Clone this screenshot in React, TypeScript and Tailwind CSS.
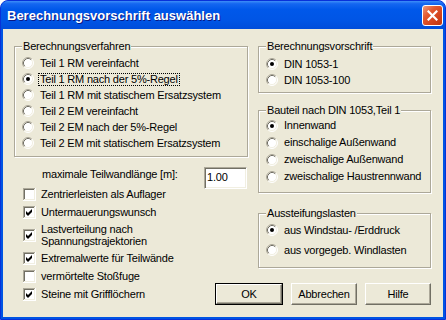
import React from "react";

function Radio({ checked }: { checked?: boolean }) {
  return (
    <svg width="12" height="12" viewBox="0 0 12 12" className="shrink-0">
      <circle cx="6" cy="6" r="5" fill="#fff" />
      <path d="M2.11 9.89 A5.5 5.5 0 0 1 9.89 2.11" stroke="#ACA899" strokeWidth="1" fill="none" />
      <path d="M9.89 2.11 A5.5 5.5 0 0 1 2.11 9.89" stroke="#FFFFFF" strokeWidth="1" fill="none" />
      <path d="M2.82 9.18 A4.5 4.5 0 0 1 9.18 2.82" stroke="#716F64" strokeWidth="1" fill="none" />
      <path d="M9.18 2.82 A4.5 4.5 0 0 1 2.82 9.18" stroke="#F1EFE2" strokeWidth="1" fill="none" />
      {checked && <circle cx="6" cy="6" r="2" fill="#000" />}
    </svg>
  );
}

function Check({ checked }: { checked?: boolean }) {
  return (
    <svg width="13" height="13" viewBox="0 0 13 13" className="shrink-0" shapeRendering="crispEdges">
      <rect x="0" y="0" width="13" height="13" fill="#fff" />
      <rect x="0" y="0" width="12" height="1" fill="#ACA899" />
      <rect x="0" y="0" width="1" height="12" fill="#ACA899" />
      <rect x="1" y="1" width="10" height="1" fill="#716F64" />
      <rect x="1" y="1" width="1" height="10" fill="#716F64" />
      <rect x="0" y="12" width="13" height="1" fill="#fff" />
      <rect x="12" y="0" width="1" height="13" fill="#fff" />
      <rect x="1" y="11" width="11" height="1" fill="#F1EFE2" />
      <rect x="11" y="1" width="1" height="11" fill="#F1EFE2" />
      {checked && <polygon points="3,5 5,7 9,3 9,6 5,10 3,8" fill="#000" shapeRendering="geometricPrecision" />}
    </svg>
  );
}

function Group({
  label,
  className,
  children,
}: {
  label: string;
  className: string;
  children: React.ReactNode;
}) {
  return (
    <div
      className={`relative border border-[#ACA899] shadow-[inset_1px_1px_0_#fff,1px_1px_0_#fff] pl-[7px] ${className}`}
    >
      <span className="absolute -top-[7px] left-[7px] bg-[#ECE9D8] px-[1px] leading-[13px] whitespace-nowrap">
        {label}
      </span>
      {children}
    </div>
  );
}

function RadioRow({
  label,
  checked,
  focus,
  h,
}: {
  label: string;
  checked?: boolean;
  focus?: boolean;
  h: string;
}) {
  return (
    <div className={`flex items-center gap-[6px] ${h}`}>
      <Radio checked={checked} />
      {focus ? (
        <span className="-ml-[2px] border border-dotted border-black px-[1px] leading-[11px] whitespace-nowrap">
          {label}
        </span>
      ) : (
        <span className="leading-[13px] whitespace-nowrap">{label}</span>
      )}
    </div>
  );
}

function CheckRow({
  children,
  checked,
  className = "",
}: {
  children: React.ReactNode;
  checked?: boolean;
  className?: string;
}) {
  return (
    <div className={`ml-[9px] flex items-center gap-[5px] ${className}`}>
      <Check checked={checked} />
      <span className="leading-[13px] whitespace-nowrap">{children}</span>
    </div>
  );
}

function Btn({ label, def }: { label: string; def?: boolean }) {
  const face =
    "flex items-center justify-center bg-[#ECE9D8] border border-t-white border-l-white border-b-[#716F64] border-r-[#716F64] shadow-[inset_-1px_-1px_0_#ACA899] leading-[13px]";
  if (def) {
    return (
      <div className="w-[68px] h-[22px] border border-black flex">
        <div className={`${face} flex-1`}>{label}</div>
      </div>
    );
  }
  return <div className={`${face} w-[66px] h-[22px]`}>{label}</div>;
}

export default function App() {
  return (
    <div className="w-[446px] h-[320px] flex flex-col rounded-t-[8px] overflow-hidden bg-[#0054E3] border border-[#0831D9] text-[11px] tracking-[-0.2px] text-black [font-family:'Liberation_Sans',Arial,sans-serif]">
      {/* Title bar */}
      <div className="h-[28px] shrink-0 flex items-center justify-between pl-[6px] pr-[2px] bg-[linear-gradient(to_bottom,#3D8EF8_0%,#1466F0_10%,#0058EA_30%,#0055E5_70%,#004DDA_100%)]">
        <span className="pt-[2px] text-[13px] tracking-normal font-bold text-white [text-shadow:1px_1px_0_#0A1883] whitespace-nowrap">
          Berechnungsvorschrift auswählen
        </span>
        <div className="w-[21px] h-[21px] rounded-[3px] border border-white flex items-center justify-center bg-[linear-gradient(135deg,#EE9A7C_0%,#E2582F_35%,#D2421C_70%,#C0360F_100%)]">
          <svg width="11" height="11" viewBox="0 0 11 11">
            <path d="M1.5 1.5 L9.5 9.5 M9.5 1.5 L1.5 9.5" stroke="#fff" strokeWidth="2.2" strokeLinecap="square" />
          </svg>
        </div>
      </div>

      {/* Body */}
      <div className="flex-1 mx-[2px] mb-[2px] bg-[#ECE9D8] pt-[17px] pl-[11px] flex">
        {/* Left column */}
        <div className="w-[234px] flex flex-col">
          <Group label="Berechnungsverfahren" className="h-[111px] pt-[8px]">
            <RadioRow h="h-[16px]" label="Teil 1 RM vereinfacht" />
            <RadioRow h="h-[16px]" label="Teil 1 RM nach der 5%-Regel" checked focus />
            <RadioRow h="h-[16px]" label="Teil 1 RM mit statischem Ersatzsystem" />
            <RadioRow h="h-[16px]" label="Teil 2 EM vereinfacht" />
            <RadioRow h="h-[16px]" label="Teil 2 EM nach der 5%-Regel" />
            <RadioRow h="h-[16px]" label="Teil 2 EM mit statischem Ersatzsystem" />
          </Group>

          <div className="mt-[10px] h-[21px] flex items-start">
            <span className="ml-[28px] pt-[1px] leading-[13px] whitespace-nowrap">
              maximale Teilwandlänge [m]:
            </span>
            <div className="ml-auto mr-[1px] w-[43px] h-[22px] shrink-0 bg-white flex items-center pl-[1px] pb-[2px] border border-t-[#ACA899] border-l-[#ACA899] border-b-white border-r-white shadow-[inset_1px_1px_0_#716F64,inset_-1px_-1px_0_#F1EFE2]">
              <span className="pl-[1px] leading-[13px]">1.00</span>
            </div>
          </div>

          <div className="flex flex-col">
            <CheckRow>Zentrierleisten als Auflager</CheckRow>
            <CheckRow checked className="mt-[5px]">
              Untermauerungswunsch
            </CheckRow>
            <div className="ml-[9px] mt-[4px] flex items-center gap-[5px]">
              <Check checked />
              <span className="leading-[12px] whitespace-nowrap">
                Lastverteilung nach
                <br />
                Spannungstrajektorien
              </span>
            </div>
            <CheckRow checked className="mt-[5px]">
              Extremalwerte für Teilwände
            </CheckRow>
            <CheckRow className="mt-[5px]">vermörtelte Stoßfuge</CheckRow>
            <CheckRow checked className="mt-[5px]">
              Steine mit Grifflöchern
            </CheckRow>
          </div>
        </div>

        {/* Right column */}
        <div className="ml-[10px] w-[173px] flex flex-col">
          <Group label="Berechnungsvorschrift" className="h-[47px] pt-[9px]">
            <RadioRow h="h-[16px]" label="DIN 1053-1" checked />
            <RadioRow h="h-[16px]" label="DIN 1053-100" />
          </Group>

          <Group label="Bauteil nach DIN 1053,Teil 1" className="mt-[17px] h-[83px] pt-[6px]">
            <RadioRow h="h-[17px]" label="Innenwand" checked />
            <RadioRow h="h-[17px]" label="einschalige Außenwand" />
            <RadioRow h="h-[17px]" label="zweischalige Außenwand" />
            <RadioRow h="h-[17px]" label="zweischalige Haustrennwand" />
          </Group>

          <Group label="Aussteifungslasten" className="mt-[20px] h-[55px] pt-[6px]">
            <RadioRow h="h-[20px]" label="aus Windstau- /Erddruck" checked />
            <RadioRow h="h-[20px]" label="aus vorgegeb. Windlasten" />
          </Group>

          <div className="-ml-[43px] mt-[15px] flex gap-[8px]">
            <Btn label="OK" def />
            <Btn label="Abbrechen" />
            <Btn label="Hilfe" />
          </div>
        </div>
      </div>
    </div>
  );
}
